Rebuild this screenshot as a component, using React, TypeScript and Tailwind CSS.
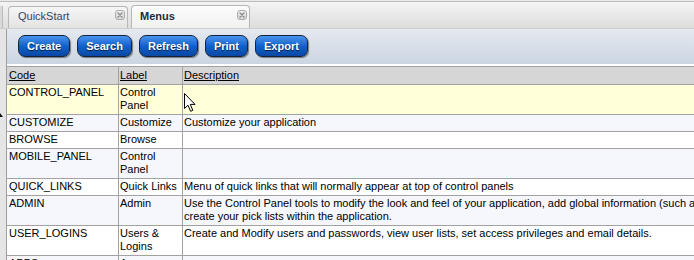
import React from "react";

type Row = { code: string; label: string[]; desc: string[]; bg: string };

const rows: Row[] = [
  { code: "CONTROL_PANEL", label: ["Control", "Panel"], desc: [], bg: "bg-[#ffffd9]" },
  { code: "CUSTOMIZE", label: ["Customize"], desc: ["Customize your application"], bg: "bg-[#f5f7fd]" },
  { code: "BROWSE", label: ["Browse"], desc: [], bg: "bg-white" },
  { code: "MOBILE_PANEL", label: ["Control", "Panel"], desc: [], bg: "bg-[#f5f7fd]" },
  {
    code: "QUICK_LINKS",
    label: ["Quick Links"],
    desc: ["Menu of quick links that will normally appear at top of control panels"],
    bg: "bg-white",
  },
  {
    code: "ADMIN",
    label: ["Admin"],
    desc: [
      "Use the Control Panel tools to modify the look and feel of your application, add global information (such as company name and address),",
      "create your pick lists within the application.",
    ],
    bg: "bg-[#f5f7fd]",
  },
  {
    code: "USER_LOGINS",
    label: ["Users &", "Logins"],
    desc: ["Create and Modify users and passwords, view user lists, set access privileges and email details."],
    bg: "bg-white",
  },
  { code: "APPS", label: ["Apps"], desc: [], bg: "bg-[#f5f7fd]" },
];

function CloseIcon() {
  return (
    <div className="w-[10px] h-[10px] rounded-[3px] border border-[#ababab] bg-gradient-to-b from-[#f0f0f0] to-[#d6d6d6] flex items-center justify-center">
      <svg width="6" height="6" viewBox="0 0 6 6">
        <path d="M1 1 L5 5 M5 1 L1 5" stroke="#8a8a8a" strokeWidth="1.4" strokeLinecap="round" />
      </svg>
    </div>
  );
}

function Btn({ children }: { children: React.ReactNode }) {
  return (
    <div className="h-[22px] px-[8px] flex items-center rounded-[7px] border border-[#13233a] bg-gradient-to-b from-[#4a94ee] via-[#0f62cc] to-[#0a48a4] shadow-[1px_1px_1px_rgba(0,0,0,0.45)] text-white font-bold leading-[13px] [text-shadow:0_1px_1px_rgba(0,0,0,0.7)]">
      {children}
    </div>
  );
}

function Lines({ lines }: { lines: string[] }) {
  return (
    <>
      {lines.map((l, i) => (
        <div key={i} className="whitespace-nowrap">
          {l}
        </div>
      ))}
    </>
  );
}

export default function App() {
  return (
    <div className="relative w-[694px] h-[260px] overflow-hidden bg-white font-['Liberation_Sans',Arial,sans-serif] text-[11px] text-black">
      <div className="h-[1px] bg-[#e8e8e8]" />
      {/* tab bar */}
      <div className="h-[28px] border-t border-b border-t-[#bdbdbd] border-b-[#cfcfcf] bg-gradient-to-b from-[#f4f4f4] to-[#dddddd] flex items-end">
        <div className="w-[3px] h-[22px] bg-[#d9d9d9] border-r border-[#bcbcbc]" />
        <div className="ml-[5px] w-[120px] h-[22px] border border-b-0 border-[#b7b7b7] rounded-t-[4px] bg-gradient-to-b from-[#f6f6f6] to-[#e3e3e3] flex items-start justify-between pl-[9px] pr-[2px]">
          <span className="pt-[3px] leading-[13px] text-[#34466a]">QuickStart</span>
          <div className="mt-[3px]">
            <CloseIcon />
          </div>
        </div>
        <div className="ml-[3px] w-[119px] h-[23px] border border-b-0 border-[#b7b7b7] rounded-t-[4px] bg-gradient-to-b from-[#fcfcfc] to-[#f1f1f1] flex items-start justify-between pl-[8px] pr-[2px]">
          <span className="pt-[4px] leading-[13px] font-bold text-[#1c2a40]">Menus</span>
          <div className="mt-[4px]">
            <CloseIcon />
          </div>
        </div>
      </div>

      <div className="flex h-[231px]">
        <div className="w-[6px] bg-[#e5e5e5]" />
        <div className="flex-1 min-w-0 border-l border-[#9e9e9e] overflow-hidden">
          {/* toolbar */}
          <div className="h-[35px] bg-gradient-to-b from-[#e5e9f0] to-[#cbd5e1] flex items-start gap-[7px] pl-[11px] pt-[6px]">
            <Btn>Create</Btn>
            <Btn>Search</Btn>
            <Btn>Refresh</Btn>
            <Btn>Print</Btn>
            <Btn>Export</Btn>
          </div>
          <div className="h-[2px] bg-white" />
          {/* table */}
          <div className="w-[1000px] border-t border-[#a2a2a2] grid grid-cols-[112px_64px_824px] leading-[13px]">
            <div className="bg-[#d6d6d6] border-r border-b border-[#a2a2a2] pl-[2px] pt-[2px] pb-[2px] underline">Code</div>
            <div className="bg-[#d6d6d6] border-r border-b border-[#a2a2a2] pl-[1px] pt-[2px] pb-[2px] underline">Label</div>
            <div className="bg-[#d6d6d6] border-b border-[#a2a2a2] pl-[1px] pt-[2px] pb-[2px] underline">Description</div>
            {rows.map((r) => (
              <React.Fragment key={r.code}>
                <div className={`${r.bg} border-r border-b border-[#a2a2a2] pl-[2px] pt-[1px] pb-[2px] whitespace-nowrap`}>
                  {r.code}
                </div>
                <div className={`${r.bg} border-r border-b border-[#a2a2a2] pl-[1px] pt-[1px] pb-[2px]`}>
                  <Lines lines={r.label} />
                </div>
                <div className={`${r.bg} border-b border-[#a2a2a2] pl-[1px] pt-[1px] pb-[2px]`}>
                  <Lines lines={r.desc} />
                </div>
              </React.Fragment>
            ))}
          </div>
        </div>
      </div>

      {/* small resize marker at left edge */}
      <svg className="absolute left-0 top-[113px]" width="4" height="5" viewBox="0 0 4 5">
        <path d="M0 0 L3 4 L0 4 Z" fill="#111" />
      </svg>

      {/* mouse cursor */}
      <svg className="absolute left-[184px] top-[93px]" width="12" height="20" viewBox="0 0 12 20">
        <path
          d="M0.5 0.5 L0.5 15.5 L4 12.2 L6.6 18.3 L8.8 17.4 L6.3 11.4 L11 11.4 Z"
          fill="#ffffff"
          stroke="#000000"
          strokeWidth="1"
          strokeLinejoin="round"
        />
      </svg>
    </div>
  );
}
